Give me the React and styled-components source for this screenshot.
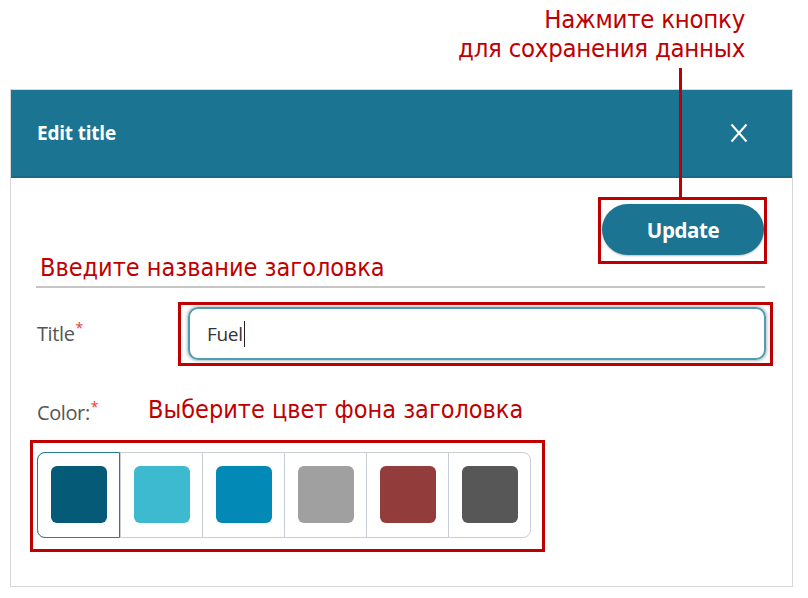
import React from "react";
import styled, { createGlobalStyle } from "styled-components";

const GlobalStyle = createGlobalStyle`
  html, body {
    margin: 0;
    padding: 0;
    background: #ffffff;
  }
  body {
    font-family: "Open Sans", "Noto Sans", sans-serif;
  }
`;

const swatches = ["#055a78", "#3dbad0", "#0289b5", "#a0a0a0", "#923c3c", "#575757"];

function App() {
  return (
    <Page>
      <GlobalStyle />
      <TopNote>
        Нажмите кнопку
        <br />
        для сохранения данных
      </TopNote>
      <Connector />
      <Modal>
        <Header>
          <HeaderTitle>Edit title</HeaderTitle>
          <CloseButton aria-label="close">
            <svg width="18" height="20" viewBox="0 0 18 20">
              <path d="M1.5 1.5 L16.5 18.5 M16.5 1.5 L1.5 18.5" stroke="#ffffff" strokeWidth="2" fill="none" />
            </svg>
          </CloseButton>
        </Header>
        <Body>
          <ActionRow>
            <Hint $offset="4px" $pull="-18px">Введите название заголовка</Hint>
            <Callout $pad="4px 0 6px 1px" $margin="0 -2px 0 0">
              <UpdateButton>Update</UpdateButton>
            </Callout>
          </ActionRow>
          <Divider />
          <FieldRow>
            <Label $width="142px" $lift="3px">
              Title<Req>*</Req>
            </Label>
            <Callout $pad="2px 4px 3px 7px" $margin="0 -8px 0 0" $grow>
              <TextField>
                Fuel
                <Caret />
              </TextField>
            </Callout>
          </FieldRow>
          <ColorRow>
            <Label $width="112px">
              Color:<Req>*</Req>
            </Label>
            <Hint>Выберите цвет фона заголовка</Hint>
          </ColorRow>
          <Callout $pad="9px 11px 11px 4px" $margin="13px 0 0 -6px" $start>
            <SwatchGroup>
              {swatches.map((c, i) => (
                <SwatchCell key={c} $selected={i === 0} $first={i === 0}>
                  <Swatch $color={c} />
                </SwatchCell>
              ))}
            </SwatchGroup>
          </Callout>
        </Body>
      </Modal>
    </Page>
  );
}

//styled components
const Page = styled.div`
  position: relative;
  width: 808px;
  height: 598px;
  overflow: hidden;
`;

const TopNote = styled.p`
  margin: 0;
  padding: 5px 63px 0 0;
  text-align: right;
  font-family: "DejaVu Sans Condensed", "DejaVu Sans", sans-serif;
  font-size: 25.5px;
  letter-spacing: -0.25px;
  line-height: 29px;
  color: #c00000;
`;

const Connector = styled.div`
  position: absolute;
  left: 679px;
  top: 68px;
  width: 3px;
  height: 131px;
  background: #c00000;
  z-index: 2;
`;

const Modal = styled.div`
  box-sizing: border-box;
  margin: 26px 0 0 10px;
  width: 783px;
  height: 498px;
  border: 1px solid #d6d6d6;
  display: flex;
  flex-direction: column;
`;

const Header = styled.div`
  height: 86px;
  background: #1b7491;
  border-bottom: 2px solid #186b87;
  display: flex;
  align-items: center;
  justify-content: space-between;
  padding: 0 44px 0 26px;
`;

const HeaderTitle = styled.h2`
  margin: 0;
  font-size: 19px;
  font-weight: 700;
  color: #ffffff;
  letter-spacing: -0.2px;
`;

const CloseButton = styled.button`
  border: none;
  background: none;
  padding: 0;
  display: flex;
  cursor: pointer;
`;

const Body = styled.div`
  flex: 1;
  display: flex;
  flex-direction: column;
  padding: 0 27px 0 25px;
`;

const ActionRow = styled.div`
  margin-top: 19px;
  display: flex;
  justify-content: space-between;
  align-items: flex-end;
`;

const Hint = styled.span`
  margin-left: ${(p) => p.$offset || "0"};
  margin-bottom: ${(p) => p.$pull || "0"};
  font-family: "DejaVu Sans Condensed", "DejaVu Sans", sans-serif;
  font-size: 25px;
  line-height: 28px;
  color: #c00000;
`;

const Callout = styled.div`
  box-sizing: border-box;
  border: 3px solid #c00000;
  padding: ${(p) => p.$pad};
  margin: ${(p) => p.$margin};
  flex: ${(p) => (p.$grow ? "1" : "none")};
  align-self: ${(p) => (p.$start ? "flex-start" : "auto")};
  display: flex;
`;

const UpdateButton = styled.button`
  width: 162px;
  height: 51px;
  border: none;
  border-radius: 26px;
  background: #1b7491;
  color: #ffffff;
  font-family: "Open Sans", sans-serif;
  font-size: 20.5px;
  font-weight: 700;
  letter-spacing: -0.4px;
  box-shadow: 0 1px 2px rgba(0, 0, 0, 0.25);
  cursor: pointer;
`;

const Divider = styled.div`
  margin-top: 22px;
  height: 2px;
  background: #c6c6c6;
`;

const FieldRow = styled.div`
  margin-top: 14px;
  display: flex;
  align-items: center;
`;

const Label = styled.label`
  flex: 0 0 ${(p) => p.$width};
  padding-left: 1px;
  margin-bottom: ${(p) => p.$lift || "0"};
  box-sizing: border-box;
  font-size: 20px;
  color: #555555;
  letter-spacing: -0.4px;
`;

const Req = styled.sup`
  color: #e53935;
  font-size: 14px;
  margin-left: 1px;
`;

const TextField = styled.div`
  box-sizing: border-box;
  flex: 1;
  height: 53px;
  border: 2px solid #4f9cb3;
  border-radius: 10px;
  box-shadow: 0 0 3px 1px rgba(120, 130, 135, 0.55);
  display: flex;
  align-items: center;
  padding-left: 17px;
  font-size: 19px;
  color: #333333;
  letter-spacing: -0.3px;
`;

const Caret = styled.span`
  display: inline-block;
  width: 1.5px;
  height: 26px;
  margin-left: 1px;
  background: #222222;
`;

const ColorRow = styled.div`
  margin-top: 27px;
  display: flex;
  align-items: center;
  line-height: 28px;
`;

const SwatchGroup = styled.div`
  display: flex;
  border: 1px solid #c8ced3;
  border-radius: 8px;
`;

const SwatchCell = styled.div`
  box-sizing: border-box;
  width: 82px;
  height: 84px;
  display: flex;
  align-items: center;
  justify-content: center;
  border-left: ${(p) => (p.$first ? "none" : "1px solid #c8ced3")};
  ${(p) =>
    p.$selected &&
    `
    margin: -1px 0 -1px -1px;
    height: 86px;
    width: 83px;
    border: 1px solid #2a7c97;
    border-radius: 8px 0 0 8px;
  `}
`;

const Swatch = styled.div`
  width: 56px;
  height: 57px;
  border-radius: 6px;
  background: ${(p) => p.$color};
`;

export default App;
